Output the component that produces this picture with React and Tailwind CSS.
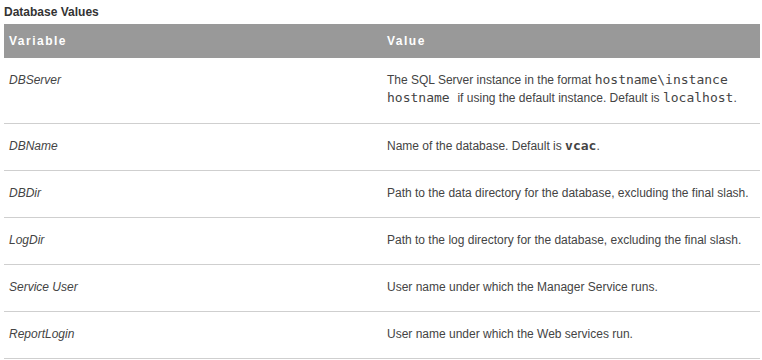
const mono = "font-['DejaVu_Sans_Mono','Liberation_Mono',monospace] text-[13px] leading-[1] whitespace-pre";

const rows = [
  {
    name: "DBServer",
    pad: "pb-[16px]",
    value: (
      <>
        The SQL Server instance in the format <code className={mono}>hostname\instance</code>
        <br />
        <code className={mono}>hostname </code>if using the default instance. Default is{" "}
        <code className={mono}>localhost</code>.
      </>
    ),
  },
  {
    name: "DBName",
    value: (
      <>
        Name of the database. Default is <code className={mono + " font-bold"}>vcac</code>.
      </>
    ),
  },
  { name: "DBDir", value: "Path to the data directory for the database, excluding the final slash." },
  { name: "LogDir", value: "Path to the log directory for the database, excluding the final slash." },
  { name: "Service User", value: "User name under which the Manager Service runs." },
  { name: "ReportLogin", value: "User name under which the Web services run." },
];

export default function App() {
  return (
    <div className="h-[360px] w-[762px] overflow-hidden bg-white px-[4px] pt-[5px] font-['Liberation_Sans',Arial,sans-serif] text-[12px] text-[#444]">
      <div className="mb-[5px] leading-[14px] font-bold text-[#333]">Database Values</div>
      <table className="w-[756px] table-fixed border-collapse">
        <thead>
          <tr className="h-[34px] bg-[#999999] text-left text-white">
            <th className="w-1/2 px-[5px] font-bold tracking-[1.5px]">Variable</th>
            <th className="w-1/2 px-[5px] font-bold tracking-[1.5px]">Value</th>
          </tr>
        </thead>
        <tbody>
          {rows.map((row) => (
            <tr key={row.name} className="border-b border-[#cfcfcf] align-top leading-[18px]">
              <td className={"px-[5px] pt-[13px] italic " + (row.pad || "pb-[15px]")}>{row.name}</td>
              <td className={"px-[5px] pt-[13px] " + (row.pad || "pb-[15px]")}>{row.value}</td>
            </tr>
          ))}
        </tbody>
      </table>
    </div>
  );
}
